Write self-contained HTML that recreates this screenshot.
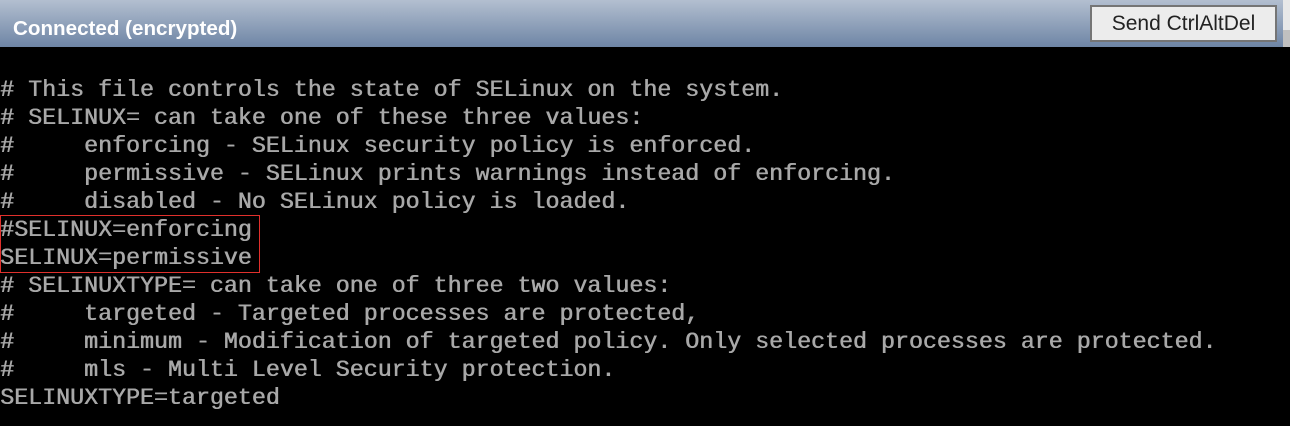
<!DOCTYPE html>
<html><head><style>
html,body{margin:0;padding:0;width:1290px;height:426px;overflow:hidden;background:#000;}
#hdr{position:absolute;left:0;top:0;width:1290px;height:47px;background:linear-gradient(#b3bfd0,#6e85a5);}
#title{position:absolute;left:13px;top:17px;font:bold 20.6px "Liberation Sans",sans-serif;color:#fff;}
#btn{position:absolute;left:1090px;top:5px;width:183px;height:33px;border:2px solid #757575;background:#ececec;font:21px "Liberation Sans",sans-serif;color:#222;text-align:center;line-height:33px;}
#sb{position:absolute;left:1283px;top:0;width:7px;height:30px;background:#e8e8e8;}
#sb2{position:absolute;left:1283px;top:30px;width:7px;height:17px;background:#c0c0c0;}
#term{position:absolute;left:0;top:76px;margin:0;font:23.3px/28px "Liberation Mono",monospace;color:#a8a8a8;white-space:pre;text-shadow:0.6px 0 0 #a8a8a8;}
#box{position:absolute;left:0;top:215px;width:258px;height:56px;border:1px solid #e0302c;}
</style></head><body>
<div id="hdr"></div>
<div id="title">Connected (encrypted)</div>
<div id="btn">Send CtrlAltDel</div>
<div id="sb"></div><div id="sb2"></div>
<pre id="term"># This file controls the state of SELinux on the system.
# SELINUX= can take one of these three values:
#     enforcing - SELinux security policy is enforced.
#     permissive - SELinux prints warnings instead of enforcing.
#     disabled - No SELinux policy is loaded.
#SELINUX=enforcing
SELINUX=permissive
# SELINUXTYPE= can take one of three two values:
#     targeted - Targeted processes are protected,
#     minimum - Modification of targeted policy. Only selected processes are protected.
#     mls - Multi Level Security protection.
SELINUXTYPE=targeted</pre>
<div id="box"></div>
</body></html>
